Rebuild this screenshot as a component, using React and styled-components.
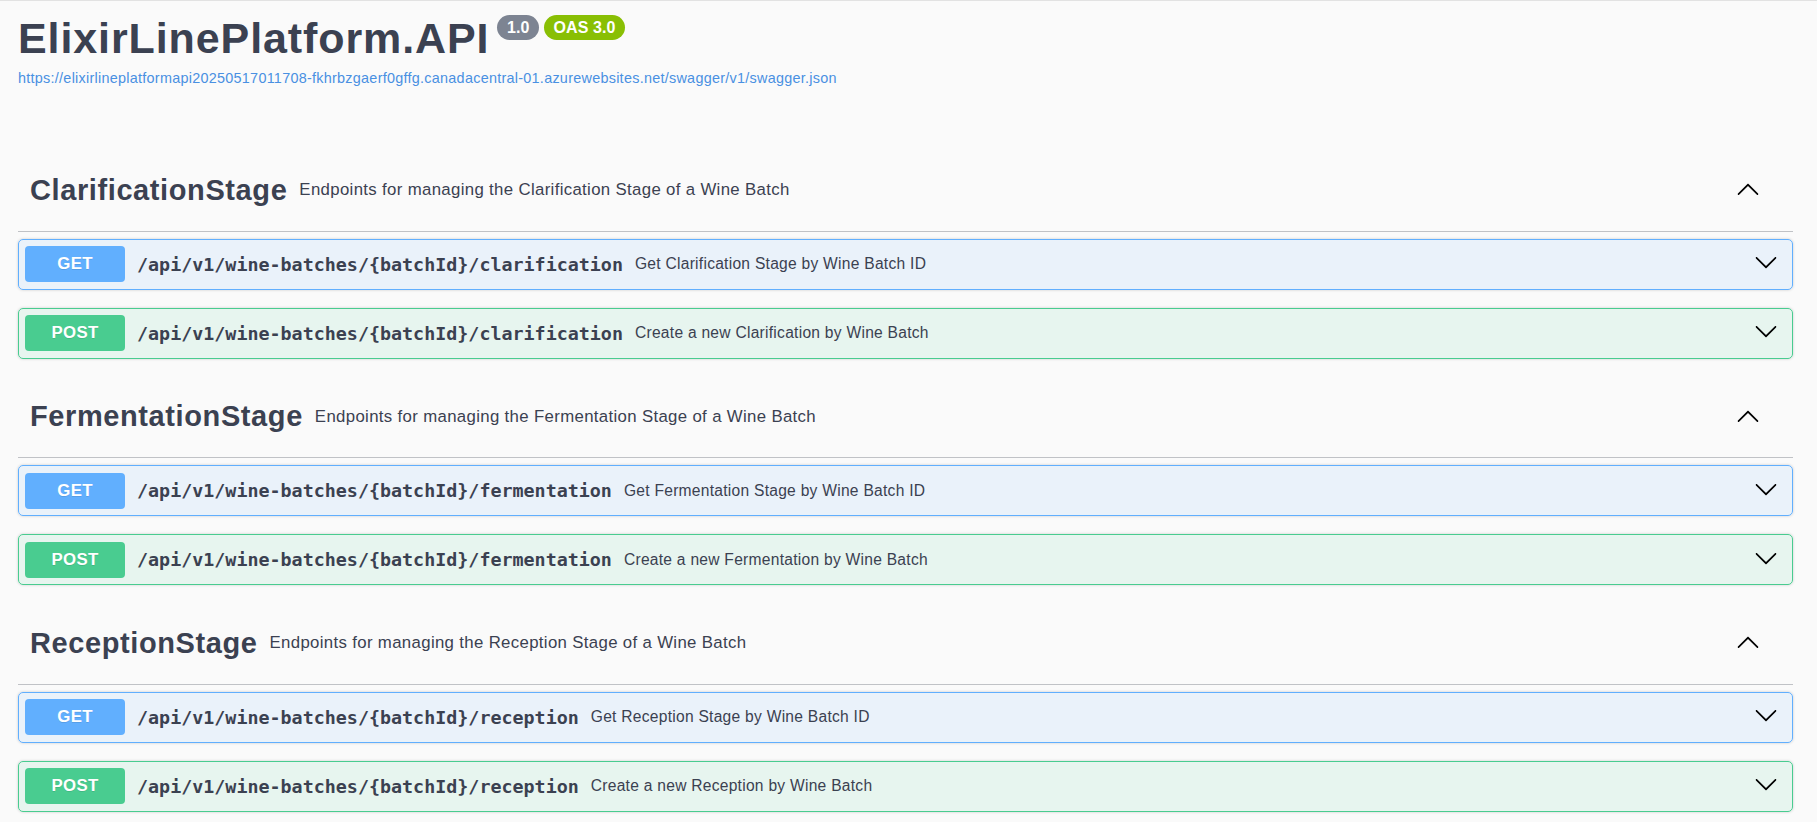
import styled, { createGlobalStyle } from "styled-components";

const GlobalStyle = createGlobalStyle`
  body {
    margin: 0;
    background-color: #fafafa;
    font-family: "Liberation Sans", Arial, sans-serif;
    color: #3b4151;
  }
`;

const Page = styled.div`
  border-top: 1px solid #e2e2e2;
  padding: 0 24px 0 18px;
`;

const Info = styled.div`
  padding-top: 13px;
  margin-bottom: 63px;
`;

const TitleRow = styled.div`
  display: flex;
  align-items: flex-start;
`;

const Title = styled.h2`
  margin: 0;
  font-size: 43px;
  line-height: 49px;
  font-weight: 700;
  letter-spacing: 0.9px;
  color: #3b4151;
`;

const Badge = styled.span`
  margin: 1px 0 0 ${(p) => (p.$first ? "8px" : "5px")};
  height: 25px;
  line-height: 25px;
  padding: 0 9.5px;
  border-radius: 57px;
  background-color: ${(p) => p.$color};
  color: #fff;
  font-size: 16px;
  font-weight: 700;
  letter-spacing: 0.1px;
`;

const SpecLink = styled.a`
  display: block;
  margin-top: 7px;
  font-size: 14.4px;
  line-height: 17px;
  letter-spacing: 0.27px;
  color: #4990e2;
  text-decoration: none;
`;

const Section = styled.div``;

const TagHeader = styled.div`
  display: flex;
  align-items: center;
  height: 80.5px;
  padding: 0 33px 0 12px;
  margin-bottom: 7px;
  border-bottom: 1px solid rgba(59, 65, 81, 0.3);
`;

const TagName = styled.span`
  font-size: 29px;
  font-weight: 700;
  letter-spacing: 0.6px;
  color: #3b4151;
`;

const TagDesc = styled.span`
  margin-left: 12px;
  font-size: 16.8px;
  letter-spacing: 0.34px;
  color: #3b4151;
  flex: 1;
`;

const Opblock = styled.div`
  height: 51px;
  box-sizing: border-box;
  margin-bottom: 18px;
  border: 1px solid ${(p) => p.$color};
  border-radius: 5px;
  background-color: ${(p) => p.$bg};
  box-shadow: 0 0 3px rgba(0, 0, 0, 0.19);
  display: flex;
  align-items: center;
  padding: 0 6px;
`;

const Method = styled.span`
  width: 100px;
  height: 36px;
  line-height: 36px;
  border-radius: 4px;
  background-color: ${(p) => p.$color};
  color: #fff;
  text-align: center;
  font-size: 16.8px;
  font-weight: 700;
  letter-spacing: 0.3px;
  text-shadow: 0 1px 0 rgba(0, 0, 0, 0.1);
`;

const Path = styled.span`
  padding: 0 12px;
  font-family: "DejaVu Sans Mono", "Liberation Mono", monospace;
  font-size: 18.35px;
  font-weight: 700;
  color: #3b4151;
`;

const Summary = styled.span`
  flex: 1;
  font-size: 15.6px;
  letter-spacing: 0.26px;
  color: #3b4151;
`;

const ArrowButton = styled.span`
  display: flex;
  margin: ${(p) => (p.$up ? "0" : "0 8px 4px 0")};
`;

const Arrow = ({ up }) => (
  <ArrowButton $up={up}>
    <svg
      width="24"
      height="24"
      viewBox="0 0 20 20"
      style={up ? { transform: "rotate(180deg)" } : undefined}
    >
      <path
        fill="#000"
        d="M17.418 6.109c.272-.268.709-.268.979 0s.271.701 0 .969l-7.908 7.83c-.27.268-.707.268-.979 0l-7.908-7.83c-.27-.268-.27-.701 0-.969.271-.268.709-.268.979 0L10 13.25l7.418-7.141z"
      />
    </svg>
  </ArrowButton>
);

const methods = {
  GET: { color: "#61affe", bg: "rgba(97, 175, 254, 0.1)" },
  POST: { color: "#49cc90", bg: "rgba(73, 204, 144, 0.1)" },
};

const tags = [
  {
    name: "ClarificationStage",
    desc: "Endpoints for managing the Clarification Stage of a Wine Batch",
    path: "clarification",
    ops: [
      ["GET", "Get Clarification Stage by Wine Batch ID"],
      ["POST", "Create a new Clarification by Wine Batch"],
    ],
  },
  {
    name: "FermentationStage",
    desc: "Endpoints for managing the Fermentation Stage of a Wine Batch",
    path: "fermentation",
    ops: [
      ["GET", "Get Fermentation Stage by Wine Batch ID"],
      ["POST", "Create a new Fermentation by Wine Batch"],
    ],
  },
  {
    name: "ReceptionStage",
    desc: "Endpoints for managing the Reception Stage of a Wine Batch",
    path: "reception",
    ops: [
      ["GET", "Get Reception Stage by Wine Batch ID"],
      ["POST", "Create a new Reception by Wine Batch"],
    ],
  },
];

const App = () => {
  return (
    <Page>
      <GlobalStyle />
      <Info>
        <TitleRow>
          <Title>ElixirLinePlatform.API</Title>
          <Badge $first $color="#7d8492">1.0</Badge>
          <Badge $color="#89bf04">OAS 3.0</Badge>
        </TitleRow>
        <SpecLink href="#">
          https://elixirlineplatformapi20250517011708-fkhrbzgaerf0gffg.canadacentral-01.azurewebsites.net/swagger/v1/swagger.json
        </SpecLink>
      </Info>

      {tags.map((tag) => (
        <Section key={tag.name}>
          <TagHeader>
            <TagName>{tag.name}</TagName>
            <TagDesc>{tag.desc}</TagDesc>
            <Arrow up />
          </TagHeader>
          {tag.ops.map(([method, summary]) => (
            <Opblock key={method} $color={methods[method].color} $bg={methods[method].bg}>
              <Method $color={methods[method].color}>{method}</Method>
              <Path>/api/v1/wine-batches/{"{batchId}"}/{tag.path}</Path>
              <Summary>{summary}</Summary>
              <Arrow />
            </Opblock>
          ))}
        </Section>
      ))}
    </Page>
  );
};

export default App;
